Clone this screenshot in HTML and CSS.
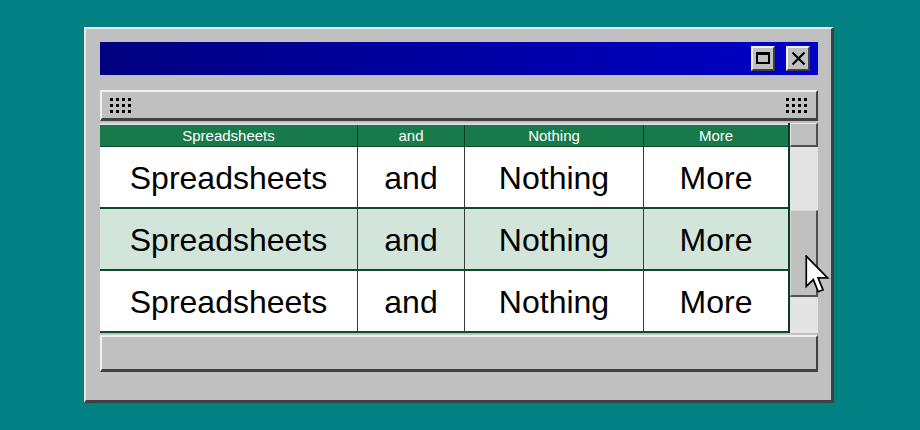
FILE: index.html
```html
<!DOCTYPE html>
<html>
<head>
<meta charset="utf-8">
<link rel="stylesheet" href="styles.css">
</head>
<body>
<div class="win">
  <div class="title">
    <div class="tbtn"><span class="max-icon"></span></div>
    <div class="tbtn">
      <svg width="15" height="15" viewBox="0 0 15 15"><path d="M1.5 1.5 L13.5 13.5 M13.5 1.5 L1.5 13.5" stroke="#000" stroke-width="2.2" fill="none"/></svg>
    </div>
  </div>
  <div class="toolbar">
    <div class="grip"><i></i><i></i><i></i><i></i><i></i><i></i><i></i><i></i><i></i><i></i><i></i><i></i></div>
    <div class="grip"><i></i><i></i><i></i><i></i><i></i><i></i><i></i><i></i><i></i><i></i><i></i><i></i></div>
  </div>
  <div class="area">
    <div class="table">
      <div class="row head">
        <div class="c c1">Spreadsheets</div><div class="c c2">and</div><div class="c c3">Nothing</div><div class="c c4">More</div>
      </div>
      <div class="row">
        <div class="c c1">Spreadsheets</div><div class="c c2">and</div><div class="c c3">Nothing</div><div class="c c4">More</div>
      </div>
      <div class="row alt">
        <div class="c c1">Spreadsheets</div><div class="c c2">and</div><div class="c c3">Nothing</div><div class="c c4">More</div>
      </div>
      <div class="row">
        <div class="c c1">Spreadsheets</div><div class="c c2">and</div><div class="c c3">Nothing</div><div class="c c4">More</div>
      </div>
    </div>
    <div class="scroll">
      <div class="sbtn"></div>
      <div class="track">
        <div class="thumb"></div>
      </div>
    </div>
    <svg class="cursor" width="25" height="40" viewBox="0 0 13 21"><path d="M0.6 0.6 L0.6 16.5 L4.3 12.9 L6.9 19.3 L9.4 18.3 L6.8 12 L11.8 12 Z" fill="#fff" stroke="#000" stroke-width="0.9" stroke-linejoin="miter"/></svg>
  </div>
  <div class="status"></div>
</div>
</body>
</html>
```
FILE: styles.css
```css
* { box-sizing: border-box; }
body {
  margin: 0;
  background: #008080;
  width: 920px;
  height: 430px;
  overflow: hidden;
  font-family: "Liberation Sans", Arial, sans-serif;
}
.win {
  margin: 27px 0 0 84px;
  width: 750px;
  height: 376px;
  background: #c0c0c0;
  border-top: 2px solid #e8e8e8;
  border-left: 2px solid #e8e8e8;
  border-right: 3px solid #404040;
  border-bottom: 3px solid #404040;
  padding: 13px 13px 28px 14px;
  display: flex;
  flex-direction: column;
}
.title {
  height: 33px;
  flex: none;
  background: linear-gradient(90deg, #000080 0%, #0000a8 55%, #0000c8 100%);
  display: flex;
  justify-content: flex-end;
  align-items: center;
  gap: 11px;
  padding: 0 8px 1px 0;
}
.tbtn {
  width: 24px;
  height: 25px;
  background: #c0c0c0;
  border-top: 2px solid #f0f0f0;
  border-left: 2px solid #f0f0f0;
  border-right: 2px solid #404040;
  border-bottom: 2px solid #404040;
  display: flex;
  align-items: center;
  justify-content: center;
}
.max-icon {
  width: 14px;
  height: 12px;
  border: 2px solid #000;
  border-top-width: 3px;
}
.toolbar {
  margin-top: 15px;
  height: 31px;
  flex: none;
  border-top: 2px solid #f0f0f0;
  border-left: 2px solid #f0f0f0;
  border-right: 2px solid #404040;
  border-bottom: 3px solid #404040;
  display: flex;
  justify-content: space-between;
  align-items: center;
  padding: 0 9px 0 8px;
}
.grip {
  display: grid;
  grid-template-columns: repeat(4, 3px);
  grid-template-rows: repeat(3, 3px);
  column-gap: 3px;
  row-gap: 3px;
  margin-top: 1px;
}
.grip i {
  display: block;
  width: 3px;
  height: 3px;
  background: #000;
}
.area {
  margin-top: 2px;
  height: 210px;
  flex: none;
  display: flex;
  position: relative;
}
.table {
  width: 690px;
  display: flex;
  flex-direction: column;
  border-right: 2px solid #0b3d24;
  background: #fff;
}
.row {
  display: flex;
  height: 62px;
  border-bottom: 2px solid #0d4a2c;
  background: #fff;
}
.row.alt { background: #d1e5db; }
.row.head {
  height: 24px;
  border-top: 2px solid #dcdcdc;
  border-bottom: 1px solid #0d4a2c;
  background: #187a4a;
}
.c {
  display: flex;
  align-items: center;
  justify-content: center;
  font-size: 32px;
  color: #000;
  border-right: 1px solid #3a3a3a;
  padding-top: 3px;
}
.head .c {
  font-size: 15px;
  color: #fff;
  border-right: 1px solid #0c3a22;
  padding-top: 0;
  padding-bottom: 1px;
}
.c1 { width: 258px; }
.c2 { width: 107px; }
.c3 { width: 179px; }
.c4 { width: 144px; border-right: none; }
.head .c4 { border-right: none; }
.scroll {
  width: 28px;
  display: flex;
  flex-direction: column;
}
.sbtn {
  height: 24px;
  flex: none;
  background: #c0c0c0;
  border-top: 1px solid #e8e8e8;
  border-left: 1px solid #e8e8e8;
  border-right: 2px solid #505050;
  border-bottom: 2px solid #505050;
}
.track {
  flex: 1;
  background: #e4e4e4;
  padding-top: 63px;
}
.thumb {
  height: 87px;
  background: #c0c0c0;
  border-top: 1px solid #d8d8d8;
  border-left: 1px solid #d8d8d8;
  border-right: 2px solid #505050;
  border-bottom: 2px solid #505050;
}
.cursor {
  position: absolute;
  left: 705px;
  top: 132px;
}
.status {
  margin-top: 2px;
  height: 37px;
  flex: none;
  border-top: 2px solid #f0f0f0;
  border-left: 2px solid #f0f0f0;
  border-right: 2px solid #404040;
  border-bottom: 3px solid #404040;
}
```
